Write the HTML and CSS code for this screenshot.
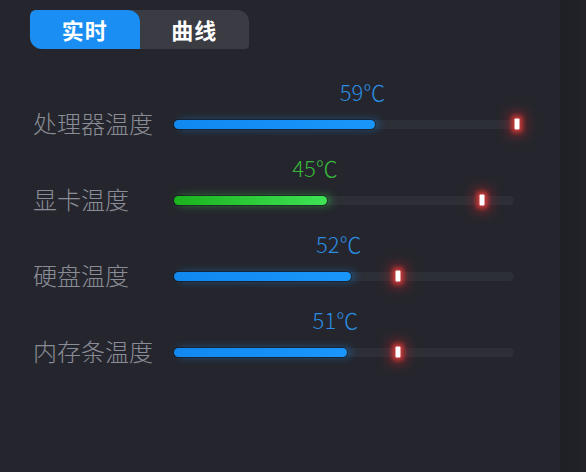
FILE: index.html
```html
<!DOCTYPE html>
<html lang="zh">
<head>
<meta charset="utf-8">
<title>温度监控</title>
<link rel="stylesheet" href="styles.css">
</head>
<body>
<div class="app">
  <main class="panel">
    <div class="tabs">
      <div class="tab tab-active">实时</div>
      <div class="tab">曲线</div>
    </div>
    <div class="rows">
      <div class="row">
        <div class="label">处理器温度</div>
        <div class="track">
          <div class="fill fill-blue" style="width:59%"><span class="value value-blue">59℃</span></div>
          <div class="marker" style="left:101%"></div>
        </div>
      </div>
      <div class="row">
        <div class="label">显卡温度</div>
        <div class="track">
          <div class="fill fill-green" style="width:45%"><span class="value value-green">45℃</span></div>
          <div class="marker" style="left:90.6%"></div>
        </div>
      </div>
      <div class="row">
        <div class="label">硬盘温度</div>
        <div class="track">
          <div class="fill fill-blue" style="width:52%"><span class="value value-blue">52℃</span></div>
          <div class="marker" style="left:66%"></div>
        </div>
      </div>
      <div class="row">
        <div class="label">内存条温度</div>
        <div class="track">
          <div class="fill fill-blue" style="width:51%"><span class="value value-blue">51℃</span></div>
          <div class="marker" style="left:66%"></div>
        </div>
      </div>
    </div>
  </main>
  <aside class="strip"></aside>
</div>
</body>
</html>
```

FILE: styles.css
```css
html, body {
  margin: 0;
  padding: 0;
  background: #25262d;
  font-family: "Noto Sans CJK SC", "Noto Sans", sans-serif;
}

.app {
  display: flex;
  width: 586px;
  height: 472px;
  overflow: hidden;
}

.panel {
  width: 560px;
  background: #25262d;
}

.strip {
  flex: 1;
  background: linear-gradient(90deg, #1e1f24, #222328);
}

.tabs {
  display: flex;
  margin: 10px 0 0 30px;
  width: 219px;
  height: 39px;
  background: #3a3b43;
  border-radius: 6px 12px 4px 12px;
}

.tab {
  width: 110px;
  display: flex;
  align-items: center;
  justify-content: center;
  color: #ffffff;
  font-size: 22px;
  font-weight: 700;
  letter-spacing: 1px;
  padding-bottom: 1px;
}

.tab-active {
  background: #1a8ef2;
  border-radius: 6px 12px 0 12px;
}

.rows {
  margin-top: 37px;
  display: flex;
  flex-direction: column;
}

.row {
  height: 76px;
  display: grid;
  grid-template-columns: 141px 340px;
  align-items: center;
  padding-left: 33px;
}

.label {
  font-size: 24px;
  line-height: 24px;
  font-weight: 300;
  color: #8a8c97;
  white-space: nowrap;
  margin-top: -2px;
}

.track {
  position: relative;
  height: 9px;
  background: #2d2f37;
  border-radius: 5px;
}

.fill {
  position: relative;
  height: 9px;
  border-radius: 5px;
}

.fill-blue {
  background: linear-gradient(90deg, #1088f0, #1a96fa);
  box-shadow: 0 0 0 1px rgba(10, 12, 18, 0.45), 4px 0 8px rgba(24, 140, 245, 0.45);
}

.fill-green {
  background: linear-gradient(90deg, #1bb21e, #3ee355);
  box-shadow: 0 0 0 1px rgba(10, 12, 18, 0.45), 4px 0 8px rgba(60, 220, 80, 0.5);
}

.value {
  position: absolute;
  right: -13px;
  bottom: 27px;
  width: 50px;
  text-align: center;
  font-size: 22px;
  line-height: 22px;
  font-weight: 300;
  white-space: nowrap;
}

.value-blue { color: #2a8ce0; }
.value-green { color: #38b83a; }

.marker {
  position: absolute;
  top: 50%;
  width: 5px;
  height: 11px;
  background: #ffffff;
  border-radius: 1px;
  transform: translate(-50%, -50%);
  box-shadow: 0 0 4px 3px rgba(225, 60, 60, 0.8), 0 0 12px 7px rgba(200, 40, 40, 0.4);
}
```
